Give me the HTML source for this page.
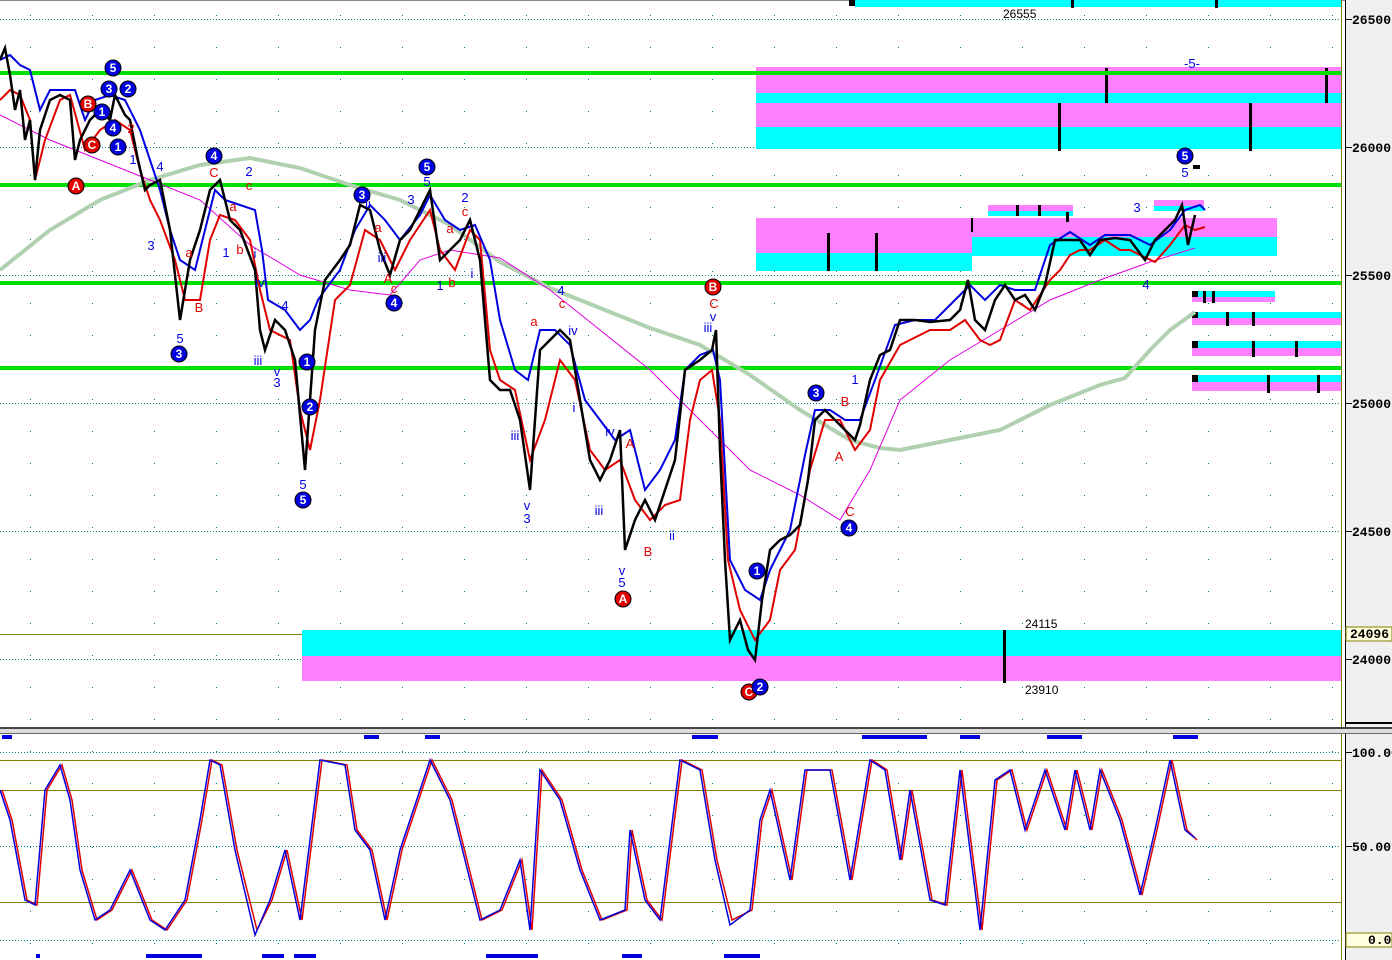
<!DOCTYPE html>
<html><head><meta charset="utf-8"><style>
html,body{margin:0;padding:0;background:#fff;}
svg{display:block;font-family:"Liberation Sans",sans-serif;}
.ax{font-family:"Liberation Mono",monospace;font-size:13px;font-weight:bold;fill:#000;}
.cb{fill:#0000e0;stroke:#000;stroke-width:1;}
.cr{fill:#e00000;stroke:#000;stroke-width:1;}
.ct{fill:#fff;font-size:12px;font-weight:bold;text-anchor:middle;}
.lb{font-size:13px;text-anchor:middle;fill:#0000e0;}
.lr{font-size:13px;text-anchor:middle;fill:#e00000;}
</style></head><body>
<svg width="1392" height="960" viewBox="0 0 1392 960" xmlns="http://www.w3.org/2000/svg">
<defs>
<pattern id="dots" x="30" y="15" width="62" height="32" patternUnits="userSpaceOnUse"><rect x="0" y="0" width="1" height="1" fill="#008080"/></pattern>
</defs>
<rect x="0" y="0" width="1392" height="960" fill="#fff"/>
<rect x="0" y="0" width="1343" height="728" fill="url(#dots)"/>
<rect x="0" y="740" width="1343" height="218" fill="url(#dots)"/>
<rect x="0" y="0" width="1392" height="1" fill="#888"/>
<rect x="1345" y="0" width="47" height="960" fill="#f0f0f0"/>
<line x1="1341.5" y1="0" x2="1341.5" y2="960" stroke="#808000"/>
<line x1="1345.5" y1="0" x2="1345.5" y2="960" stroke="#000"/>
<rect x="0" y="727" width="1392" height="2" fill="#444"/>
<rect x="0" y="729" width="1392" height="4" fill="#ddd"/>
<rect x="0" y="733" width="1392" height="1" fill="#666"/>
<g stroke="#008080" stroke-dasharray="1,2" stroke-width="1">
<line x1="0" y1="19.5" x2="1341" y2="19.5"/><line x1="0" y1="147.5" x2="1341" y2="147.5"/>
<line x1="0" y1="275.5" x2="1341" y2="275.5"/><line x1="0" y1="403.5" x2="1341" y2="403.5"/>
<line x1="0" y1="531.5" x2="1341" y2="531.5"/><line x1="0" y1="659.5" x2="1341" y2="659.5"/>
<line x1="0" y1="752.5" x2="1341" y2="752.5"/><line x1="0" y1="846.5" x2="1341" y2="846.5"/>
<line x1="0" y1="940.5" x2="1341" y2="940.5"/>
</g>
<line x1="0" y1="634.5" x2="1341" y2="634.5" stroke="#808000"/>
<g stroke="#808000"><line x1="0" y1="760.5" x2="1341" y2="760.5"/><line x1="0" y1="790.5" x2="1341" y2="790.5"/><line x1="0" y1="902.5" x2="1341" y2="902.5"/></g>
<rect x="855" y="0" width="486" height="7" fill="#00ffff"/><rect x="849" y="0" width="6" height="6" fill="#000"/>
<rect x="1071" y="0" width="3" height="8" fill="#000"/><rect x="1215" y="0" width="3" height="8" fill="#000"/>
<rect x="756" y="67" width="585" height="26" fill="#ff80ff"/>
<rect x="756" y="93" width="585" height="10" fill="#00ffff"/>
<rect x="756" y="103" width="585" height="24" fill="#ff80ff"/>
<rect x="756" y="127" width="585" height="22" fill="#00ffff"/>
<g fill="#000"><rect x="1105" y="68" width="3" height="35"/><rect x="1325" y="68" width="3" height="35"/><rect x="1058" y="103" width="3" height="48"/><rect x="1249" y="103" width="3" height="48"/></g>
<rect x="756" y="218" width="216" height="35" fill="#ff80ff"/><rect x="756" y="253" width="216" height="18" fill="#00ffff"/>
<rect x="972" y="218" width="305" height="19" fill="#ff80ff"/><rect x="972" y="237" width="305" height="19" fill="#00ffff"/>
<rect x="988" y="205" width="85" height="6" fill="#ff80ff"/><rect x="988" y="211" width="85" height="5" fill="#00ffff"/>
<rect x="1154" y="200" width="50" height="6" fill="#ff80ff"/><rect x="1154" y="206" width="50" height="5" fill="#00ffff"/>
<g fill="#000"><rect x="827" y="233" width="3" height="38"/><rect x="875" y="233" width="3" height="38"/><rect x="971" y="218" width="2" height="14"/>
<rect x="1016" y="205" width="3" height="11"/><rect x="1038" y="205" width="3" height="11"/><rect x="1066" y="212" width="3" height="10"/></g>
<rect x="1192" y="291" width="83" height="6" fill="#00ffff"/><rect x="1192" y="297" width="83" height="5" fill="#ff80ff"/>
<rect x="1192" y="312" width="149" height="6" fill="#00ffff"/><rect x="1192" y="318" width="149" height="7" fill="#ff80ff"/>
<rect x="1192" y="341" width="149" height="7" fill="#00ffff"/><rect x="1192" y="348" width="149" height="8" fill="#ff80ff"/>
<rect x="1192" y="375" width="149" height="7" fill="#00ffff"/><rect x="1192" y="382" width="149" height="9" fill="#ff80ff"/>
<g fill="#000"><rect x="1192" y="291" width="6" height="6"/><rect x="1192" y="312" width="6" height="6"/><rect x="1192" y="341" width="6" height="7"/><rect x="1192" y="375" width="6" height="7"/>
<rect x="1203" y="291" width="3" height="12"/><rect x="1212" y="291" width="3" height="12"/><rect x="1226" y="312" width="3" height="14"/><rect x="1252" y="312" width="3" height="14"/><rect x="1252" y="341" width="3" height="16"/><rect x="1295" y="341" width="3" height="16"/><rect x="1267" y="375" width="3" height="18"/><rect x="1317" y="375" width="3" height="18"/><rect x="1193" y="165" width="7" height="4"/></g>
<rect x="302" y="630" width="1039" height="26" fill="#00ffff"/><rect x="302" y="656" width="1039" height="25" fill="#ff80ff"/>
<rect x="1003" y="630" width="3" height="53" fill="#000"/>
<g fill="#00e000"><rect x="0" y="71" width="1341" height="4"/><rect x="0" y="183" width="1341" height="4"/><rect x="0" y="281" width="1341" height="4"/><rect x="0" y="366" width="1341" height="4"/></g>
<polyline fill="none" stroke="#b0d0b0" stroke-width="4" points="0,270 50,230 100,200 150,180 200,165 250,158 300,168 350,185 400,200 450,225 500,262 550,288 600,308 650,328 700,345 750,375 800,410 850,440 880,448 900,450 950,440 1000,430 1050,405 1100,385 1125,378 1150,350 1170,330 1195,312"/>
<polyline fill="none" stroke="#e000e0" stroke-width="1" points="0,115 50,140 100,160 150,180 200,200 250,245 300,275 350,290 390,295 420,260 450,250 500,258 550,290 600,330 650,370 700,420 750,470 800,495 840,520 870,470 900,400 950,360 1000,330 1050,300 1100,280 1150,262 1195,248"/>
<polyline fill="none" stroke="#e00000" stroke-width="2" points="0,100 10,90 20,95 30,120 35,180 45,140 60,100 70,95 85,150 100,130 115,120 130,130 140,170 150,200 160,220 175,260 185,300 200,300 210,240 220,215 235,220 250,240 260,290 270,330 290,340 300,410 310,450 320,400 335,300 350,285 365,230 380,240 395,270 410,240 430,210 440,250 455,270 470,230 480,240 490,350 500,380 515,390 530,460 545,420 560,360 575,380 590,450 605,470 620,460 635,500 650,520 665,505 680,500 690,420 700,380 712,370 720,420 728,560 740,610 755,640 770,620 780,570 795,550 810,470 825,420 840,420 855,450 870,430 880,380 900,345 930,330 950,330 965,320 980,340 990,345 1000,340 1015,300 1030,310 1050,280 1060,270 1070,255 1080,250 1090,250 1105,240 1120,250 1130,250 1140,255 1155,262 1170,245 1185,225 1195,230 1205,227"/>
<polyline fill="none" stroke="#0000e0" stroke-width="2" points="0,60 10,55 20,65 30,70 40,110 50,90 60,90 75,90 85,120 95,100 110,95 125,100 140,130 150,160 160,190 170,230 180,260 195,270 205,230 215,190 225,200 240,205 255,210 262,250 268,300 285,310 300,330 310,320 318,300 325,290 340,270 355,230 370,205 385,220 400,240 420,215 430,195 445,220 460,230 475,225 490,260 500,320 515,370 528,380 540,330 555,330 570,345 585,400 600,420 615,440 630,430 645,490 660,470 675,440 685,370 700,355 713,350 720,380 730,560 745,590 760,600 770,570 790,530 805,455 815,410 830,410 845,420 860,420 875,380 895,325 915,320 935,320 955,300 970,285 985,300 1000,285 1015,290 1035,290 1050,245 1070,232 1090,245 1105,235 1130,235 1150,245 1170,230 1185,210 1200,205 1205,210"/>
<polyline fill="none" stroke="#000" stroke-width="2.5" points="0,60 5,48 10,75 15,110 20,90 25,140 30,120 35,180 40,130 50,100 60,95 70,100 75,160 80,140 90,120 100,110 110,120 115,95 125,115 130,120 138,160 145,190 150,185 160,180 170,230 180,320 190,260 200,230 210,190 220,180 230,220 240,230 255,270 260,330 265,350 275,320 285,330 295,360 305,470 310,400 315,330 325,280 340,260 350,245 360,205 370,210 380,250 390,275 400,240 410,230 420,210 430,190 440,260 450,250 460,240 470,220 480,260 490,380 500,390 510,390 520,420 530,490 540,350 550,340 560,330 570,340 580,400 590,460 600,480 610,460 620,430 625,550 635,520 645,500 655,520 665,490 675,460 685,370 700,360 712,350 716,330 720,450 725,560 730,640 740,620 748,650 755,660 762,600 770,550 780,540 790,535 800,525 808,480 815,420 825,410 835,420 845,430 855,440 860,425 870,380 880,355 890,350 900,320 915,320 930,322 950,320 960,310 968,280 975,320 985,330 995,300 1005,285 1015,300 1025,295 1035,310 1045,285 1055,240 1065,240 1080,240 1090,255 1100,240 1115,238 1130,240 1145,260 1155,240 1165,230 1175,220 1182,205 1188,245 1195,215"/>
<g>
<circle cx="113" cy="68" r="8" class="cb"/><text x="113" y="72" class="ct">5</text>
<circle cx="109" cy="89" r="8" class="cb"/><text x="109" y="93" class="ct">3</text>
<circle cx="128" cy="89" r="8" class="cb"/><text x="128" y="93" class="ct">2</text>
<circle cx="88" cy="104" r="8" class="cr"/><text x="88" y="108" class="ct">B</text>
<circle cx="102" cy="112" r="8" class="cb"/><text x="102" y="116" class="ct">1</text>
<circle cx="113" cy="128" r="8" class="cb"/><text x="113" y="132" class="ct">4</text>
<circle cx="92" cy="145" r="8" class="cr"/><text x="92" y="149" class="ct">C</text>
<circle cx="118" cy="147" r="8" class="cb"/><text x="118" y="151" class="ct">1</text>
<circle cx="76" cy="186" r="8" class="cr"/><text x="76" y="190" class="ct">A</text>
<circle cx="214" cy="156" r="8" class="cb"/><text x="214" y="160" class="ct">4</text>
<circle cx="179" cy="354" r="8" class="cb"/><text x="179" y="358" class="ct">3</text>
<circle cx="307" cy="362" r="8" class="cb"/><text x="307" y="366" class="ct">1</text>
<circle cx="310" cy="407" r="8" class="cb"/><text x="310" y="411" class="ct">2</text>
<circle cx="303" cy="500" r="8" class="cb"/><text x="303" y="504" class="ct">5</text>
<circle cx="362" cy="195" r="8" class="cb"/><text x="362" y="199" class="ct">3</text>
<circle cx="427" cy="167" r="8" class="cb"/><text x="427" y="171" class="ct">5</text>
<circle cx="394" cy="303" r="8" class="cb"/><text x="394" y="307" class="ct">4</text>
<circle cx="713" cy="287" r="8" class="cr"/><text x="713" y="291" class="ct">B</text>
<circle cx="623" cy="599" r="8" class="cr"/><text x="623" y="603" class="ct">A</text>
<circle cx="757" cy="571" r="8" class="cb"/><text x="757" y="575" class="ct">1</text>
<circle cx="749" cy="692" r="8" class="cr"/><text x="749" y="696" class="ct">C</text>
<circle cx="760" cy="687" r="8" class="cb"/><text x="760" y="691" class="ct">2</text>
<circle cx="816" cy="393" r="8" class="cb"/><text x="816" y="397" class="ct">3</text>
<circle cx="849" cy="528" r="8" class="cb"/><text x="849" y="532" class="ct">4</text>
<circle cx="1185" cy="156" r="8" class="cb"/><text x="1185" y="160" class="ct">5</text>
</g>
<g>
<text x="133" y="164" class="lb">1</text><text x="160" y="171" class="lb">4</text><text x="151" y="250" class="lb">3</text><text x="180" y="343" class="lb">5</text>
<text x="249" y="176" class="lb">2</text><text x="226" y="257" class="lb">1</text><text x="255" y="258" class="lb">i</text><text x="260" y="287" class="lb">iv</text>
<text x="285" y="310" class="lb">4</text><text x="258" y="365" class="lb">iii</text><text x="277" y="376" class="lb">v</text><text x="277" y="387" class="lb">3</text><text x="303" y="489" class="lb">5</text>
<text x="368" y="208" class="lb">ii</text><text x="411" y="204" class="lb">3</text><text x="427" y="186" class="lb">5</text><text x="465" y="202" class="lb">2</text><text x="382" y="262" class="lb">iii</text>
<text x="440" y="290" class="lb">1</text><text x="472" y="278" class="lb">i</text><text x="561" y="295" class="lb">4</text><text x="573" y="335" class="lb">iv</text>
<text x="515" y="440" class="lb">iii</text><text x="527" y="510" class="lb">v</text><text x="527" y="523" class="lb">3</text><text x="574" y="412" class="lb">i</text>
<text x="599" y="515" class="lb">iii</text><text x="610" y="436" class="lb">iv</text><text x="622" y="575" class="lb">v</text><text x="622" y="587" class="lb">5</text><text x="672" y="540" class="lb">ii</text>
<text x="713" y="321" class="lb">v</text><text x="708" y="332" class="lb">iii</text><text x="855" y="384" class="lb">1</text>
<text x="1137" y="212" class="lb">3</text><text x="1146" y="289" class="lb">4</text><text x="1185" y="177" class="lb">5</text><text x="1192" y="68" class="lb">-5-</text>
</g>
<g>
<text x="214" y="177" class="lr">C</text><text x="249" y="190" class="lr">c</text><text x="233" y="211" class="lr">a</text><text x="240" y="254" class="lr">b</text>
<text x="189" y="257" class="lr">a</text><text x="199" y="312" class="lr">B</text><text x="131" y="133" class="lr">2</text>
<text x="378" y="232" class="lr">a</text><text x="388" y="283" class="lr">A</text><text x="394" y="293" class="lr">c</text>
<text x="465" y="216" class="lr">c</text><text x="450" y="233" class="lr">a</text><text x="452" y="287" class="lr">b</text>
<text x="534" y="326" class="lr">a</text><text x="562" y="308" class="lr">c</text><text x="630" y="448" class="lr">A</text><text x="648" y="556" class="lr">B</text>
<text x="714" y="308" class="lr">C</text><text x="845" y="406" class="lr">B</text><text x="839" y="461" class="lr">A</text><text x="850" y="516" class="lr">C</text>
</g>
<g font-size="12" fill="#000" font-family="Liberation Sans,sans-serif">
<text x="1003" y="18">26555</text><text x="1025" y="628">24115</text><text x="1025" y="694">23910</text>
</g>
<polyline fill="none" stroke="#e00000" stroke-width="1.5" points="2,790 12,820 27,900 37,905 47,790 62,765 72,800 82,870 97,920 112,910 132,870 152,920 167,930 187,900 202,820 212,760 222,765 237,850 257,930 272,900 287,850 302,920 322,760 347,765 357,830 372,850 387,920 402,850 432,760 452,800 462,840 482,920 502,910 522,860 532,930 542,770 562,800 582,870 602,920 627,910 632,830 647,900 662,920 682,760 702,770 717,860 732,920 752,910 762,820 772,790 792,880 807,770 832,770 852,880 872,760 887,770 902,860 912,790 932,900 947,905 962,770 982,930 997,780 1012,770 1027,830 1047,770 1067,830 1077,770 1092,830 1102,770 1122,820 1142,895 1157,830 1172,760 1187,830 1197,840"/>
<polyline fill="none" stroke="#0000e0" stroke-width="1.5" points="0,790 10,820 25,900 35,905 45,790 60,765 70,800 80,870 95,920 110,910 130,870 150,920 165,930 185,900 200,820 210,760 220,765 235,850 255,935 270,900 285,850 300,920 320,760 345,765 355,830 370,850 385,920 400,850 430,760 450,800 460,840 480,920 500,910 520,860 530,930 540,770 560,800 580,870 600,920 625,910 630,830 645,900 660,920 680,760 700,770 715,860 730,925 750,910 760,820 770,790 790,880 805,770 830,770 850,880 870,760 885,770 900,860 910,790 930,900 945,905 960,770 980,930 995,780 1010,770 1025,830 1045,770 1065,830 1075,770 1090,830 1100,770 1120,820 1140,895 1155,830 1170,760 1185,830 1195,838"/>
<g fill="#0000e0">
<rect x="2" y="735" width="10" height="4"/><rect x="364" y="735" width="15" height="4"/><rect x="425" y="735" width="15" height="4"/><rect x="692" y="735" width="26" height="4"/><rect x="862" y="735" width="65" height="4"/><rect x="960" y="735" width="20" height="4"/><rect x="1047" y="735" width="35" height="4"/><rect x="1173" y="735" width="25" height="4"/>
<rect x="36" y="954" width="4" height="4"/><rect x="146" y="954" width="56" height="4"/><rect x="262" y="954" width="22" height="4"/><rect x="294" y="954" width="22" height="4"/><rect x="486" y="954" width="52" height="4"/><rect x="622" y="954" width="20" height="4"/><rect x="724" y="954" width="36" height="4"/>
</g>
<g stroke="#000">
<line x1="1345" y1="19.5" x2="1352" y2="19.5"/><line x1="1345" y1="147.5" x2="1352" y2="147.5"/><line x1="1345" y1="275.5" x2="1352" y2="275.5"/><line x1="1345" y1="403.5" x2="1352" y2="403.5"/><line x1="1345" y1="531.5" x2="1352" y2="531.5"/><line x1="1345" y1="659.5" x2="1352" y2="659.5"/><line x1="1345" y1="752.5" x2="1352" y2="752.5"/><line x1="1345" y1="846.5" x2="1352" y2="846.5"/>
</g>
<g class="ax">
<text x="1352" y="24">26500.</text><text x="1352" y="152">26000.</text><text x="1352" y="280">25500.</text><text x="1352" y="408">25000.</text><text x="1352" y="536">24500.</text><text x="1352" y="664">24000.</text>
<text x="1352" y="757">100.00</text><text x="1352" y="851">50.00</text>
</g>
<rect x="1346" y="627" width="46" height="14" fill="#ffffe0" stroke="#808000"/>
<text x="1350" y="638" class="ax">24096.3</text>
<rect x="1346" y="933" width="46" height="14" fill="#ffffe0" stroke="#808000"/>
<text x="1368" y="944" class="ax">0.00</text>
<rect x="1345" y="722" width="47" height="2" fill="#000"/>
</svg>
</body></html>
